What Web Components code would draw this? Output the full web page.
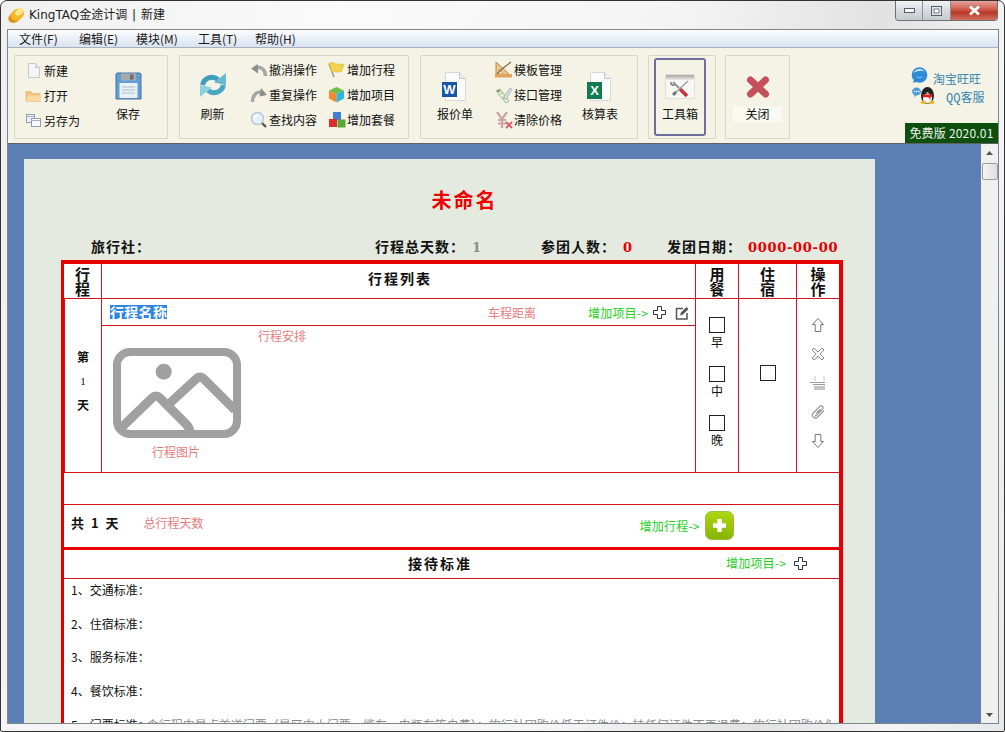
<!DOCTYPE html>
<html lang="zh">
<head>
<meta charset="utf-8">
<title>KingTAQ金途计调 | 新建</title>
<style>
    html, body { margin: 0; padding: 0; height: 100%; overflow: hidden; background: #fff; }
    body { font: 12px/16px "Noto Sans CJK SC", "Liberation Sans", sans-serif; color: #111; }
</style>
</head>
<body>
<win-frame>
    <title-bar slot="title">KingTAQ金途计调 | 新建</title-bar>
    <menu-bar>
        <menu-item style="width:60px">文件(F)</menu-item>
        <menu-item style="width:57px">编辑(E)</menu-item>
        <menu-item style="width:62px">模块(M)</menu-item>
        <menu-item style="width:57px">工具(T)</menu-item>
        <menu-item style="width:60px">帮助(H)</menu-item>
    </menu-bar>
    <tool-bar>
        <tool-group style="width:154px">
            <tool-stack style="margin-left:9px;width:75px;padding-top:2px">
                <tool-item icon="doc">新建</tool-item>
                <tool-item icon="folder">打开</tool-item>
                <tool-item icon="saveas">另存为</tool-item>
            </tool-stack>
            <tool-btn icon="save" style="width:58px">保存</tool-btn>
        </tool-group>
        <tool-group style="width:230px">
            <tool-btn icon="refresh" style="width:65px">刷新</tool-btn>
            <tool-stack style="margin-left:4px;width:78px">
                <tool-item icon="undo">撤消操作</tool-item>
                <tool-item icon="redo">重复操作</tool-item>
                <tool-item icon="find">查找内容</tool-item>
            </tool-stack>
            <tool-stack style="width:80px">
                <tool-item icon="flag">增加行程</tool-item>
                <tool-item icon="cube">增加项目</tool-item>
                <tool-item icon="blocks">增加套餐</tool-item>
            </tool-stack>
        </tool-group>
        <tool-group style="width:218px">
            <tool-btn icon="word" style="width:68px">报价单</tool-btn>
            <tool-stack style="margin-left:5px;width:75px">
                <tool-item icon="template">模板管理</tool-item>
                <tool-item icon="iface">接口管理</tool-item>
                <tool-item icon="clear">清除价格</tool-item>
            </tool-stack>
            <tool-btn icon="excel" style="width:62px">核算表</tool-btn>
        </tool-group>
        <tool-group style="width:68px;margin-left:-1px;padding:2px 9px 2px 5px;box-sizing:border-box">
            <tool-btn icon="toolbox" active style="width:100%">工具箱</tool-btn>
        </tool-group>
        <tool-group style="width:65px;margin-left:-2px">
            <tool-btn icon="close" dim style="width:100%">关闭</tool-btn>
        </tool-group>
        <side-panel></side-panel>
    </tool-bar>
    <doc-view>
        <doc-page>
            <doc-info></doc-info>
            <trip-table></trip-table>
            <std-section></std-section>
        </doc-page>
    </doc-view>
</win-frame>

<script>
const ICONS = {
    logo: [17, 16, `<ellipse cx="6.500" cy="10.500" rx="6.500" ry="5" fill="#df8f14" transform="rotate(-30 6.500 10.500)"/><ellipse cx="9.500" cy="7.500" rx="7" ry="5.500" fill="#f4b72a" transform="rotate(-35 9.500 7.500)"/><ellipse cx="11.500" cy="4.800" rx="4.600" ry="3" fill="#fde58a" transform="rotate(-35 11.500 4.800)"/>`],
    doc: [16, 17, `<path d="M2.500 1.500h7l4 4v10h-11z" fill="#f3f4f6" stroke="#c5c7cc"/><path d="M9.500 1.500v4h4" fill="#e2e4e8" stroke="#c5c7cc"/>`],
    folder: [17, 15, `<path d="M1 3.500h5l1.500 2H15v8H1z" fill="#f2c27e" stroke="#e5b06a" stroke-width=".7"/><path d="M1 13.500l1.500-6h13.500l-1 6z" fill="#fbd9a2"/>`],
    saveas: [17, 15, `<rect x="1.500" y="1.500" width="8" height="8" fill="#eef2f6" stroke="#8da0b4"/><rect x="6.500" y="5.500" width="9" height="8" fill="#f6f8fa" stroke="#8da0b4"/><path d="M1.500 3.500h8M6.500 7.500h9" stroke="#9fb4c8"/>`],
    save: [27, 28, `<path d="M2 1h23l1 1v25H1V2z" fill="#5f9fd8" stroke="#4a6f9e"/><rect x="6" y="1.500" width="15" height="7" fill="#a9a9a9"/><rect x="15" y="2.500" width="3.500" height="5" fill="#6d6d6d"/><rect x="4.500" y="11" width="18" height="15" fill="#e9f0f7"/><path d="M7 15h13M7 18h13M7 21h13" stroke="#a9bfd6"/>`],
    refresh: [28, 26, `<path d="M3.500 13C5 6 13 3 19 7.500" fill="none" stroke="#3f9dbf" stroke-width="5"/><path d="M27 1v12L15 10.500z" fill="#69b8d0"/><path d="M24.500 13C23 20 15 23 9 18.500" fill="none" stroke="#4aa7c4" stroke-width="5"/><path d="M1 25V13l12 2.500z" fill="#8fd0de"/>`],
    undo: [18, 16, `<path d="M15.500 14C15.500 7 10 4 6 6.500" fill="none" stroke="#a6a6a6" stroke-width="3.400"/><path d="M1 6.500L8 2v9.500z" fill="#8e8e8e"/>`],
    redo: [18, 16, `<path d="M2.500 15C2.500 8 7 4 12 5.500" fill="none" stroke="#a6a6a6" stroke-width="3.400"/><path d="M17 8l-7.500 1.500L11 1z" fill="#8e8e8e"/>`],
    find: [18, 18, `<path d="M11 11l5 5" stroke="#555" stroke-width="2.400"/><circle cx="7.500" cy="7.500" r="6" fill="#e5f0f8" stroke="#b6c6d2" stroke-width="1.500"/><path d="M4.500 7a3 3 0 0 1 3-3" stroke="#fff" fill="none" stroke-width="1.500"/>`],
    flag: [19, 17, `<path d="M2 3l5 13" stroke="#a49a7e" stroke-width="1.600"/><path d="M2 2c4-2 7 2 10 1l5 .5-2.500 7c-3 1.500-6-.5-9.500 .5z" fill="#f4d24d" stroke="#d9b535" stroke-width=".6"/>`],
    cube: [17, 17, `<path d="M8.500 1L16 4.500 8.500 8 1 4.500z" fill="#6fbe4a"/><path d="M1 4.500L8.500 8v8.500L1 12.500z" fill="#f08a2c"/><path d="M16 4.500L8.500 8v8.500l7.500-4z" fill="#2fb4dc"/>`],
    blocks: [18, 17, `<rect x="5" y="1" width="8" height="8" fill="#3f7fd4"/><rect x="1" y="8" width="8" height="8" fill="#dc2c2c"/><rect x="9.500" y="8.500" width="8" height="8" fill="#58a83a"/>`],
    word: [26, 29, `<path d="M3.500 .5h14l6 6v22h-20z" fill="#fbfbfb" stroke="#d8d8d8"/><path d="M17.500 .5v6h6" fill="#eee" stroke="#c4c4c4"/><rect x="0" y="10" width="15" height="15" fill="#1656a8"/><text x="7.500" y="22" font-family="Liberation Sans" font-size="13" font-weight="700" text-anchor="middle" fill="#fff">W</text>`],
    excel: [26, 29, `<path d="M3.500 .5h14l6 6v22h-20z" fill="#fbfbfb" stroke="#d8d8d8"/><path d="M17.500 .5v6h6" fill="#eee" stroke="#c4c4c4"/><rect x="0" y="10" width="15" height="17" fill="#117a50"/><text x="7.500" y="23" font-family="Liberation Sans" font-size="13" font-weight="700" text-anchor="middle" fill="#fff">X</text>`],
    template: [19, 17, `<path d="M2 1l14 13H2z" fill="#efc48a" stroke="#b98a4a"/><path d="M5 8l4 5H5z" fill="#fff4dc" stroke="#b98a4a" stroke-width=".6"/><path d="M1 15l7-7 9-7" stroke="#7d6a45" stroke-width="1.200" fill="none"/><rect x="1" y="13" width="17" height="3.500" fill="#e3a35e"/>`],
    iface: [19, 18, `<path d="M2 5l4-2 9 12-3 2z" fill="#eef3d8" stroke="#9fb57c"/><path d="M9 12L16 2l2 1.500-6 10z" fill="#d6dfe6" stroke="#98a7b0" stroke-width=".7"/><path d="M3 5l2-1 1 2M6 8l2-1M9 12l2-1" stroke="#8aa66a" stroke-width=".8"/>`],
    clear: [18, 18, `<path d="M2 1l5 7 5-7M7 8v9M3 9h8M3 12.500h8" fill="none" stroke="#c8a4a4" stroke-width="2.200"/><path d="M11 11l6 6M17 11l-6 6" stroke="#e2586a" stroke-width="1.800"/>`],
    toolbox: [30, 25, `<defs><linearGradient id="t" x1="0" y1="0" x2="0" y2="1"><stop offset="0" stop-color="#a9a7a4"/><stop offset="1" stop-color="#eeecea"/></linearGradient></defs><rect x=".5" y=".5" width="29" height="24" fill="#f8f7f4" stroke="#e2e0dc"/><rect x="1" y="1" width="28" height="5" fill="url(#t)"/><path d="M8 8l6 6" stroke="#8e9498" stroke-width="2"/><path d="M6 8a2.500 2.500 0 0 0 3.500 3" fill="none" stroke="#70767a" stroke-width="1.500"/><path d="M15 15l7 7" stroke="#c8323a" stroke-width="3.600"/><path d="M23 7L9 20" stroke="#9aa4aa" stroke-width="1.600"/><path d="M11 18l-3 3" stroke="#6f787e" stroke-width="3"/>`],
    close: [24, 22, `<path d="M4.500 4l15 14M19.500 4l-15 14" stroke="#c4505c" stroke-width="7" stroke-linecap="round"/>`],
    wang: [17, 18, `<path d="M3 14l-1 3 4-1.500z" fill="#2a7fd0"/><circle cx="8.500" cy="9" r="7.800" fill="#2d8ad8"/><path d="M2.500 7c1-4 8-6 11-1.500C10 4 6 5 2.500 7z" fill="#cfeafb"/><path d="M6 10.500a3.500 3 0 0 0 5.500 0" fill="none" stroke="#8cc8f0" stroke-width="1"/>`],
    qq: [25, 18, `<path d="M1 5.500a4.500 4 0 0 1 9 0 4.500 4 0 0 1-5 4l-2 2 .5-2.500A4 4 0 0 1 1 5.500z" fill="#4d9bdc"/><circle cx="3.500" cy="5.500" r=".8" fill="#fff"/><circle cx="5.800" cy="5.500" r=".8" fill="#fff"/><circle cx="8" cy="5.500" r=".8" fill="#fff"/><ellipse cx="16.500" cy="9.500" rx="6.500" ry="8.500" fill="#222"/><ellipse cx="16.500" cy="12.500" rx="4.500" ry="5" fill="#fff"/><path d="M11.500 8.500h10v2l-2 .5v3l-2-2.800h-6z" fill="#d8201c"/><ellipse cx="12.500" cy="16.500" rx="3" ry="1.400" fill="#eeb01c"/><ellipse cx="20.500" cy="16.500" rx="3" ry="1.400" fill="#eeb01c"/><path d="M15 6h3l-1.500 1.500z" fill="#eeb01c"/>`],
    picture: [128, 90, `<rect x="4" y="4" width="120" height="82" rx="13" fill="#fff" stroke="#a0a0a0" stroke-width="8"/><circle cx="50.700" cy="23.700" r="8" fill="#a0a0a0"/><path d="M57 55L83 31Q87 27 91 31L122 62" fill="none" stroke="#a0a0a0" stroke-width="9"/><path d="M6 82L39 50Q43 46 47 50L73 76Q77 80 77 85" fill="none" stroke="#a0a0a0" stroke-width="9"/>`],
    plus: [13, 13, `<path d="M4.500 .5h4v4h4v4h-4v4h-4v-4h-4v-4h4z" fill="#fff" stroke="#333"/>`],
    edit: [14, 14, `<path d="M8 2.500H1.500v10.500h10.500V7" fill="none" stroke="#555" stroke-width="1.500"/><path d="M5 9.500l1-3L11.500 1l2 2L8 8.500z" fill="#555"/>`],
    up: [14, 14, `<path d="M7 .5L12.500 6.500H9.800v7H4.200v-7H1.500z" fill="#fff" stroke="#777"/>`],
    down: [14, 14, `<path d="M7 13.500L12.500 7.500H9.800v-7H4.200v7H1.500z" fill="#fff" stroke="#777"/>`],
    del: [14, 14, `<path d="M5.200 7L1 3l2-2 4 4 4-4 2 2-4 4 4 4-2 2-4-4-4 4-2-2z" fill="#fff" stroke="#8a8a8a"/>`],
    pagebreak: [16, 14, `<path d="M5 0v5M14 0v5" stroke="#c4c4c4"/><path d="M0 6.500h15M3 8.500h12" stroke="#9a9a9a"/><path d="M4 11h11M4 13h11" stroke="#c4c4c4" stroke-width="2"/>`],
    clip: [14, 14, `<path d="M4 11.500L11.500 4a1.800 1.800 0 0 0-2.600-2.600L2 8.200a3 3 0 0 0 4.200 4.200L13 5.500M5.500 8L9.500 4" fill="none" stroke="#999" stroke-width="1.300"/>`],
    addday: [29, 29, `<defs><linearGradient id="g" x1="0" y1="0" x2="0" y2="1"><stop offset="0" stop-color="#aed70f"/><stop offset="1" stop-color="#86b404"/></linearGradient></defs><rect x=".5" y=".5" width="28" height="28" rx="6" fill="url(#g)" stroke="#97c042"/><path d="M14.500 8v13M8 14.500h13" stroke="#fff" stroke-width="4.400"/>`]
};

class AppIcon extends HTMLElement {
    connectedCallback() {
        const [w, h, body] = ICONS[this.getAttribute("name")];
        this.attachShadow({ mode: "open" });
        this.shadowRoot.innerHTML = `
            <style>
                :host { display: inline-flex; flex: none; }
                svg { display: block; }
            </style>
            <svg width="${w}" height="${h}" viewBox="0 0 ${w} ${h}">${body}</svg>
        `;
    }
}
customElements.define("app-icon", AppIcon);

class WinFrame extends HTMLElement {
    constructor() {
        super();
        this.attachShadow({ mode: "open" });
        this.shadowRoot.innerHTML = `
            <style>
                :host {
                    display: flex; flex-direction: column;
                    box-sizing: border-box; width: 1005px; height: 732px;
                    padding: 0 5px 7px 6px;
                    border: 1px solid #333; border-radius: 7px 7px 2px 2px;
                    background: linear-gradient(100deg, #f0f0f0 0%, #fafafa 30%, #f4f4f4 60%, #e2e2e2 78%, #f4f4f4 90%, #e6e8ea 100%);
                    overflow: hidden;
                }
                .client {
                    flex: 1; min-height: 0;
                    display: flex; flex-direction: column;
                    border: 1px solid #7f858c;
                }
            </style>
            <slot name="title"></slot>
            <div class="client"><slot></slot></div>
        `;
    }
}
customElements.define("win-frame", WinFrame);

class TitleBar extends HTMLElement {
    constructor() {
        super();
        this.attachShadow({ mode: "open" });
        this.shadowRoot.innerHTML = `
            <style>
                :host { display: flex; height: 28px; padding-left: 1px; color: #222; }
                .logo { margin-top: 6px; }
                .text {
                    margin: 6px 0 0 4px; line-height: 16px; font-size: 12px; white-space: nowrap;
                    font-family: "DejaVu Sans", "Noto Sans CJK SC", sans-serif; word-spacing: 1px;
                }
                .ctl {
                    margin-left: auto; margin-right: 1px; display: flex; height: 19px;
                    border: 1px solid #6d7278; border-top: 0; border-radius: 0 0 4px 4px; overflow: hidden;
                }
                .ctl div { display: flex; align-items: center; justify-content: center; border-left: 1px solid #8b9096;
                    background: linear-gradient(#f2f3f5, #d8dade 50%, #c6c9ce); }
                .ctl div:first-child { border: 0; }
                .min { width: 26px; } .max { width: 27px; }
                .ctl .cls { width: 46px; background: linear-gradient(#e3a39a, #cf5a4a 45%, #b83828 60%, #d0705c); }
            </style>
            <app-icon class="logo" name="logo"></app-icon>
            <div class="text"><slot></slot></div>
            <div class="ctl">
                <div class="min"><svg width="11" height="6"><rect x=".5" y=".5" width="10" height="4" fill="#f8f8f8" stroke="#555d66"/></svg></div>
                <div class="max"><svg width="11" height="10"><rect x=".5" y=".5" width="10" height="9" fill="#e8e8e8" stroke="#555d66"/><rect x="3" y="3" width="5" height="4" fill="#fff" stroke="#555d66" stroke-width=".8"/></svg></div>
                <div class="cls"><svg width="13" height="11"><path d="M2 1.500l9 8M11 1.500l-9 8" stroke="#fff" stroke-width="2.800"/></svg></div>
            </div>
        `;
    }
}
customElements.define("title-bar", TitleBar);

class MenuBar extends HTMLElement {
    constructor() {
        super();
        this.attachShadow({ mode: "open" });
        this.shadowRoot.innerHTML = `
            <style>
                :host {
                    display: flex; align-items: center; flex: none; height: 18px; padding: 1px 0 0 11px;
                    background: linear-gradient(#fbfcfe, #d9e3f1);
                    border-bottom: 1px solid #a9b1bd; box-sizing: border-box;
                }
            </style>
            <slot></slot>
        `;
    }
}
customElements.define("menu-bar", MenuBar);

class MenuItem extends HTMLElement {
    constructor() {
        super();
        this.attachShadow({ mode: "open" });
        this.shadowRoot.innerHTML = `
            <style>:host { display: block; flex: none; white-space: nowrap; color: #1a1a1a; }</style>
            <slot></slot>
        `;
    }
}
customElements.define("menu-item", MenuItem);

class ToolBar extends HTMLElement {
    constructor() {
        super();
        this.attachShadow({ mode: "open" });
        this.shadowRoot.innerHTML = `
            <style>
                :host {
                    display: flex; flex: none; gap: 11px; height: 96px; box-sizing: border-box;
                    padding: 7px 0 0 6px;
                    background: #f5f3e6; border-bottom: 1px solid #5d6166;
                }
            </style>
            <slot></slot>
        `;
    }
}
customElements.define("tool-bar", ToolBar);

class ToolGroup extends HTMLElement {
    constructor() {
        super();
        this.attachShadow({ mode: "open" });
        this.shadowRoot.innerHTML = `
            <style>
                :host {
                    display: flex; flex: none; height: 84px; box-sizing: border-box;
                    border: 1px solid #d9d7c8; border-radius: 1px;
                }
            </style>
            <slot></slot>
        `;
    }
}
customElements.define("tool-group", ToolGroup);

class ToolStack extends HTMLElement {
    constructor() {
        super();
        this.attachShadow({ mode: "open" });
        this.shadowRoot.innerHTML = `
            <style>:host { display: flex; flex-direction: column; flex: none; padding-top: 1px; }</style>
            <slot></slot>
        `;
    }
}
customElements.define("tool-stack", ToolStack);

class ToolItem extends HTMLElement {
    connectedCallback() {
        this.attachShadow({ mode: "open" });
        this.shadowRoot.innerHTML = `
            <style>
                :host { display: flex; align-items: center; height: 25px; white-space: nowrap; color: #111; }
                .ic { display: flex; justify-content: center; width: 19px; flex: none; margin-right: 1px; }
            </style>
            <div class="ic"><app-icon name="${this.getAttribute("icon")}"></app-icon></div>
            <slot></slot>
        `;
    }
}
customElements.define("tool-item", ToolItem);

class ToolBtn extends HTMLElement {
    connectedCallback() {
        const active = this.hasAttribute("active");
        const dim = this.hasAttribute("dim");
        this.attachShadow({ mode: "open" });
        this.shadowRoot.innerHTML = `
            <style>
                :host {
                    display: flex; flex-direction: column; align-items: center; flex: none;
                    box-sizing: border-box; white-space: nowrap; color: #111;
                    padding-top: ${active ? 14 : dim ? 20 : 16}px;
                    ${active ? "border: 2px solid #6c6f9e; border-radius: 3px; height: 78px;" : ""}
                }
                .box { height: ${active ? 32 : dim ? 30 : 34}px; }
                .label { line-height: 16px; ${dim ? "background:#faf9f2;padding:0 12px;" : ""} }
            </style>
            <div class="box"><app-icon name="${this.getAttribute("icon")}"></app-icon></div>
            <div class="label"><slot></slot></div>
        `;
    }
}
customElements.define("tool-btn", ToolBtn);

class SidePanel extends HTMLElement {
    constructor() {
        super();
        this.attachShadow({ mode: "open" });
        this.shadowRoot.innerHTML = `
            <style>
                :host {
                    display: flex; flex-direction: column; flex: none; align-items: stretch;
                    margin-left: auto; width: 93px; color: #3685ad;
                }
                .link { display: flex; align-items: center; height: 20px; padding-left: 6px; white-space: nowrap; }
                .wang { gap: 5px; margin-top: 10px; }
                .qq { gap: 10px; }
                .link span { margin-top: 8px; }
                .qq span { font-family: "Liberation Mono", "Noto Sans CJK SC", monospace; }
                .badge {
                    margin-top: auto; height: 20px; line-height: 20px; text-align: center;
                    background: #0d4f0d; color: #eef3ea; white-space: nowrap; letter-spacing: .2px;
                }
            </style>
            <div class="link wang"><app-icon name="wang"></app-icon><span>淘宝旺旺</span></div>
            <div class="link qq"><app-icon name="qq"></app-icon><span>QQ客服</span></div>
            <div class="badge">免费版 2020.01</div>
        `;
    }
}
customElements.define("side-panel", SidePanel);

class DocView extends HTMLElement {
    constructor() {
        super();
        this.attachShadow({ mode: "open" });
        this.shadowRoot.innerHTML = `
            <style>
                :host { display: flex; flex: 1; min-height: 0; background: #5c7fb4; }
                .view { flex: 1; min-width: 0; overflow: hidden; padding: 15px 0 0 16px; }
                .bar {
                    flex: none; width: 17px; display: flex; flex-direction: column;
                    background: #f0f0f0;
                }
                .arrow { height: 17px; display: flex; align-items: center; justify-content: center; }
                .thumb {
                    height: 15px; margin: 2px 0 0 1px; width: 14px;
                    border: 1px solid #9a9a9a; border-radius: 2px;
                    background: linear-gradient(90deg, #f4f4f4, #dedede);
                }
                .end { margin-top: auto; }
            </style>
            <div class="view"><slot></slot></div>
            <div class="bar">
                <div class="arrow"><svg width="7" height="4"><path d="M3.500 0L7 4H0z" fill="#555"/></svg></div>
                <div class="thumb"></div>
                <div class="arrow end"><svg width="7" height="4"><path d="M3.500 4L7 0H0z" fill="#555"/></svg></div>
            </div>
        `;
    }
}
customElements.define("doc-view", DocView);

class DocPage extends HTMLElement {
    constructor() {
        super();
        this.attachShadow({ mode: "open" });
        this.shadowRoot.innerHTML = `
            <style>
                :host {
                    display: block; width: 851px; box-sizing: border-box; padding-top: 28px; padding-bottom: 40px;
                    background: #e5eae0;
                }
                h1 {
                    margin: 0; height: 26px; line-height: 26px; padding-left: 30px; text-align: center;
                    font-size: 20px; font-weight: 700; letter-spacing: 2px; color: #f00000;
                }
            </style>
            <h1>未命名</h1>
            <slot></slot>
        `;
    }
}
customElements.define("doc-page", DocPage);

class DocInfo extends HTMLElement {
    constructor() {
        super();
        this.attachShadow({ mode: "open" });
        this.shadowRoot.innerHTML = `
            <style>
                :host {
                    display: flex; margin-top: 23px; height: 20px; line-height: 20px; padding-left: 67px;
                    font-size: 14px; font-weight: 700; letter-spacing: 1px; white-space: nowrap; color: #111;
                }
                .one { width: 284px; } .two { width: 166px; } .three { width: 126px; }
                b { font-family: "DejaVu Serif", serif; font-size: 13px; margin-left: 7px; }
                .days { color: #8a8a8a; }
                .red { color: #e80000; }
                .date { letter-spacing: .7px; margin-left: 6px; }
            </style>
            <div class="one">旅行社：</div>
            <div class="two">行程总天数：<b class="days">1</b></div>
            <div class="three">参团人数：<b class="red">0</b></div>
            <div>发团日期：<b class="red date">0000-00-00</b></div>
        `;
    }
}
customElements.define("doc-info", DocInfo);

const RED_TABLE_STYLE = `
    :host { display: block; margin: 4px 0 0 37px; width: 782px; box-sizing: border-box;
        border: solid #e80000; border-width: 4px 4px 0 3px; background: #fff; }
    .green { color: #22d022; white-space: nowrap; letter-spacing: .2px; }
    .salmon { color: #e87c7c; white-space: nowrap; }
`;

class TripTable extends HTMLElement {
    constructor() {
        super();
        this.attachShadow({ mode: "open" });
        this.shadowRoot.innerHTML = `
            <style>
                ${RED_TABLE_STYLE}
                .grid { display: grid; grid-template-columns: 37px 594px 43px 58px 43px; }
                .grid > div { box-sizing: border-box; border-bottom: 1px solid #d81020; }
                .grid > div + div { border-left: 1px solid #d81020; }
                .head {
                    height: 35px; display: flex; align-items: center; justify-content: center; text-align: center;
                    font-size: 15px; font-weight: 700; line-height: 15px;
                }
                .head span { width: 1em; }
                .grid > .title { font-size: 14px; letter-spacing: 2px; padding: 0 0 5px 3px; }
                .day {
                    height: 174px; display: flex; flex-direction: column; align-items: center; justify-content: center; gap: 8px;
                    font-weight: 700; padding-bottom: 10px;
                }
                .day i { font: 400 11px/16px "Liberation Serif", serif; }
                .main { display: flex; flex-direction: column; height: 174px; }
                .name { display: flex; align-items: center; flex: none; height: 27px; padding: 1px 0 0 8px;
                    border-bottom: 1px solid #d81020; box-sizing: border-box; }
                .name b { background: #2f85e6; color: #fff; font-size: 14px; line-height: 14px; letter-spacing: .3px; width: 57px; margin-top: -2px; white-space: nowrap; }
                .dist { margin-left: 321px; }
                .add { margin-left: 52px; }
                .name app-icon + app-icon { margin-left: 9px; }
                .name .plus { margin-left: 5px; }
                .body { padding: 2px 0 0 11px; }
                .plan { margin-left: 145px; }
                .pic { display: block; margin-top: 4px; }
                .cap { margin: 6px 0 0 39px; }
                .meals { display: flex; flex-direction: column; align-items: center; padding-top: 18px; height: 174px; }
                .meal { text-align: center; margin-bottom: 16px; }
                .meal span { display: block; margin-top: 1px; line-height: 16px; }
                .check { display: block; box-sizing: border-box; width: 16px; height: 16px; border: 1px solid #222; background: #fff; }
                .stay { display: flex; justify-content: center; padding-top: 66px; height: 174px; }
                .ops { display: flex; flex-direction: column; align-items: center; gap: 15px; padding-top: 19px; height: 174px; }
                .grid > .blank { grid-column: 1 / -1; height: 32px; border-left: 0; }
                .grid > .total { grid-column: 1 / -1; height: 42px; border: 0; display: flex; align-items: center; padding: 0 0 6px 7px; }
                .total b { font-size: 13px; letter-spacing: 1px; word-spacing: 2px; }
                .sum { margin-left: 24px; }
                .more { margin-left: 436px; margin-top: 6px; }
                .btn { margin: 4px 0 0 5px; }
            </style>
            <div class="grid">
                <div class="head"><span>行程</span></div>
                <div class="head title">行程列表</div>
                <div class="head"><span>用餐</span></div>
                <div class="head"><span>住宿</span></div>
                <div class="head"><span>操作</span></div>

                <div class="day"><span>第</span><i>1</i><span>天</span></div>
                <div class="main">
                    <div class="name">
                        <b>行程名称</b>
                        <span class="salmon dist">车程距离</span>
                        <span class="green add">增加项目-&gt;</span>
                        <app-icon class="plus" name="plus"></app-icon>
                        <app-icon name="edit"></app-icon>
                    </div>
                    <div class="body">
                        <div class="salmon plan">行程安排</div>
                        <app-icon class="pic" name="picture"></app-icon>
                        <div class="salmon cap">行程图片</div>
                    </div>
                </div>
                <div class="meals">
                    <div class="meal"><i class="check"></i><span>早</span></div>
                    <div class="meal"><i class="check"></i><span>中</span></div>
                    <div class="meal"><i class="check"></i><span>晚</span></div>
                </div>
                <div class="stay"><i class="check"></i></div>
                <div class="ops">
                    <app-icon name="up"></app-icon>
                    <app-icon name="del"></app-icon>
                    <app-icon name="pagebreak"></app-icon>
                    <app-icon name="clip"></app-icon>
                    <app-icon name="down"></app-icon>
                </div>

                <div class="blank"></div>
                <div class="total">
                    <b>共 1 天</b>
                    <span class="salmon sum">总行程天数</span>
                    <span class="green more">增加行程-&gt;</span>
                    <app-icon class="btn" name="addday"></app-icon>
                </div>
            </div>
        `;
    }
}
customElements.define("trip-table", TripTable);

class StdSection extends HTMLElement {
    constructor() {
        super();
        this.attachShadow({ mode: "open" });
        this.shadowRoot.innerHTML = `
            <style>
                ${RED_TABLE_STYLE}
                :host { margin-top: 0; border-top-width: 3px; }
                .head {
                    display: flex; align-items: center; height: 29px; box-sizing: border-box; padding: 0 0 2px 344px;
                    border-bottom: 1px solid #d81020;
                }
                .head b { font-size: 14px; letter-spacing: 2px; white-space: nowrap; }
                .add { margin-left: 254px; }
                .head app-icon { margin-left: 8px; }
                .rows { padding: 2px 0 0 7px; }
                .row { height: 33.700px; line-height: 17px; white-space: nowrap; overflow: hidden; width: 760px; }
                .rule { color: #8a8a8a; margin-left: -3px; }
            </style>
            <div class="head">
                <b>接待标准</b>
                <span class="green add">增加项目-&gt;</span>
                <app-icon name="plus"></app-icon>
            </div>
            <div class="rows">
                <div class="row">1、交通标准：</div>
                <div class="row">2、住宿标准：</div>
                <div class="row">3、服务标准：</div>
                <div class="row">4、餐饮标准：</div>
                <div class="row">5、门票标准：<span class="rule">含行程中景点首道门票（景区中小门票，缆车，电瓶车等自费）；旅行社团购价低于订件价；持任何证件不再退费；旅行社团购价低</span></div>
            </div>
        `;
    }
}
customElements.define("std-section", StdSection);
</script>
</body>
</html>
